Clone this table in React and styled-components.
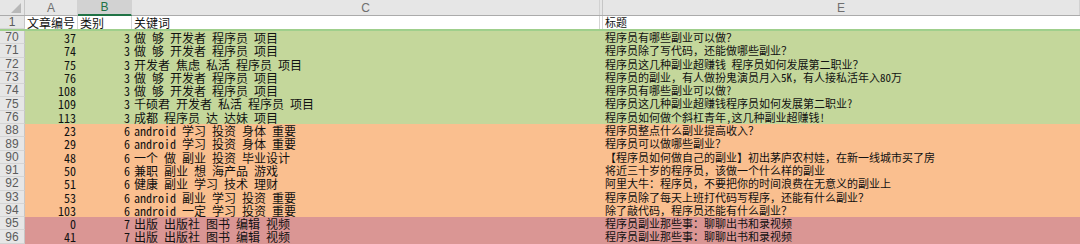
import React from "react";
import styled, { createGlobalStyle } from "styled-components";

const Global = createGlobalStyle`
  html, body { margin: 0; padding: 0; background: #ffffff; overflow: hidden; }
  * { box-sizing: border-box; }
`;

const COLS = "25px 53px 54px 468px 3px 477px";
const CJK = `"Noto Sans Mono CJK SC", "Noto Sans CJK SC", "DejaVu Sans Mono", monospace`;

const Sheet = styled.div`
  width: 1080px;
  height: 244px;
  display: flex;
  flex-direction: column;
  overflow: hidden;
`;

const HeaderRow = styled.div`
  display: grid;
  grid-template-columns: ${COLS};
  height: 16px;
  background: #e6e6e6;
  border-bottom: 1px solid #ababab;
`;

const Corner = styled.div`
  position: relative;
  border-right: 1px solid #c6c6c6;
  svg { position: absolute; right: 3px; bottom: 2px; }
`;

const ColHead = styled.div`
  display: flex;
  align-items: center;
  justify-content: center;
  font-family: "Liberation Sans", Arial, sans-serif;
  font-size: 12px;
  color: ${(p) => (p.$active ? "#217346" : "#6f6f6f")};
  background: ${(p) => (p.$active ? "#d2d2d2" : "transparent")};
  border-right: 1px solid #d2d2d2;
  border-bottom: ${(p) => (p.$active ? "2px solid #217346" : "none")};
  margin-bottom: ${(p) => (p.$active ? "-1px" : "0")};
`;

const HiddenMark = styled.div`
  border-right: 1px solid #c6c6c6;
`;

const Row = styled.div`
  display: grid;
  grid-template-columns: ${COLS};
  height: ${(p) => p.$h};
  flex: none;
  background: ${(p) => p.$fill || "#ffffff"};
  border-bottom: ${(p) => (p.$freeze ? "2px solid #9fcf8c" : "none")};
`;

const RowHead = styled.div`
  background: #e6e6e6;
  border-right: 1px solid #c6c6c6;
  border-bottom: 1px solid #d4d4d4;
  font-family: "Liberation Sans", Arial, sans-serif;
  font-size: 12px;
  color: #5c5c5c;
  display: flex;
  align-items: center;
  justify-content: center;
  line-height: 1;
`;

const Cell = styled.div`
  font-family: ${CJK};
  font-size: ${(p) => p.$size || "12px"};
  color: #111111;
  white-space: pre;
  overflow: visible;
  text-align: ${(p) => (p.$right ? "right" : "left")};
  padding: ${(p) => (p.$right ? "0 2px 0 0" : "0 0 0 2px")};
  line-height: ${(p) => p.$h};
  border-right: ${(p) => (p.$grid ? "1px solid #d4d4d4" : "none")};
  position: relative;
  z-index: ${(p) => (p.$spill ? 1 : 0)};
`;

const GREEN = "#c4d79b";
const ORANGE = "#fabf8f";
const PINK = "#da9694";

const rows = [
  [70, 37, 3, "做 够 开发者 程序员 项目", "程序员有哪些副业可以做？", GREEN],
  [71, 74, 3, "做 够 开发者 程序员 项目", "程序员除了写代码，还能做哪些副业？", GREEN],
  [72, 75, 3, "开发者 焦虑 私活 程序员 项目", "程序员这几种副业超赚钱 程序员如何发展第二职业？", GREEN],
  [73, 76, 3, "做 够 开发者 程序员 项目", "程序员的副业，有人做扮鬼演员月入5K，有人接私活年入80万", GREEN],
  [74, 108, 3, "做 够 开发者 程序员 项目", "程序员有哪些副业可以做?", GREEN],
  [75, 109, 3, "千硕君 开发者 私活 程序员 项目", "程序员这几种副业超赚钱程序员如何发展第二职业?", GREEN],
  [76, 113, 3, "成都 程序员 达 达妹 项目", "程序员如何做个斜杠青年,这几种副业超赚钱!", GREEN],
  [88, 23, 6, "android 学习 投资 身体 重要", "程序员整点什么副业提高收入？", ORANGE],
  [89, 29, 6, "android 学习 投资 身体 重要", "程序员可以做哪些副业？", ORANGE],
  [90, 48, 6, "一个 做 副业 投资 毕业设计", "【程序员如何做自己的副业】初出茅庐农村娃，在新一线城市买了房", ORANGE],
  [91, 50, 6, "兼职 副业 想 海产品 游戏", "将近三十岁的程序员，该做一个什么样的副业", ORANGE],
  [92, 51, 6, "健康 副业 学习 技术 理财", "阿里大牛：程序员，不要把你的时间浪费在无意义的副业上", ORANGE],
  [93, 53, 6, "android 副业 学习 投资 重要", "程序员除了每天上班打代码写程序，还能有什么副业？", ORANGE],
  [94, 103, 6, "android 一定 学习 投资 重要", "除了敲代码，程序员还能有什么副业？", ORANGE],
  [95, 0, 7, "出版 出版社 图书 编辑 视频", "程序员副业那些事：聊聊出书和录视频", PINK],
  [96, 41, 7, "出版 出版社 图书 编辑 视频", "程序员副业那些事：聊聊出书和录视频", PINK],
];

const RH = "13.3px";

export default function App() {
  return (
    <Sheet>
      <Global />
      <HeaderRow>
        <Corner>
          <svg width="10" height="10" viewBox="0 0 10 10">
            <polygon points="10,0 10,10 0,10" fill="#b8b8b8" />
          </svg>
        </Corner>
        <ColHead>A</ColHead>
        <ColHead $active>B</ColHead>
        <ColHead>C</ColHead>
        <HiddenMark />
        <ColHead>E</ColHead>
      </HeaderRow>
      <Row $h="15px" $freeze>
        <RowHead>1</RowHead>
        <Cell $h="13px" $grid>文章编号</Cell>
        <Cell $h="13px" $grid>类别</Cell>
        <Cell $h="13px" $grid>关键词</Cell>
        <Cell $h="13px" $grid />
        <Cell $h="13px" $size="11px">标题</Cell>
      </Row>
      {rows.map(([n, id, cat, kw, title, fill]) => (
        <Row key={n} $h={RH} $fill={fill}>
          <RowHead>{n}</RowHead>
          <Cell $h={RH} $right>{id}</Cell>
          <Cell $h={RH} $right>{cat}</Cell>
          <Cell $h={RH} $spill>{kw}</Cell>
          <Cell $h={RH} />
          <Cell $h={RH} $size="11px">{title}</Cell>
        </Row>
      ))}
    </Sheet>
  );
}
